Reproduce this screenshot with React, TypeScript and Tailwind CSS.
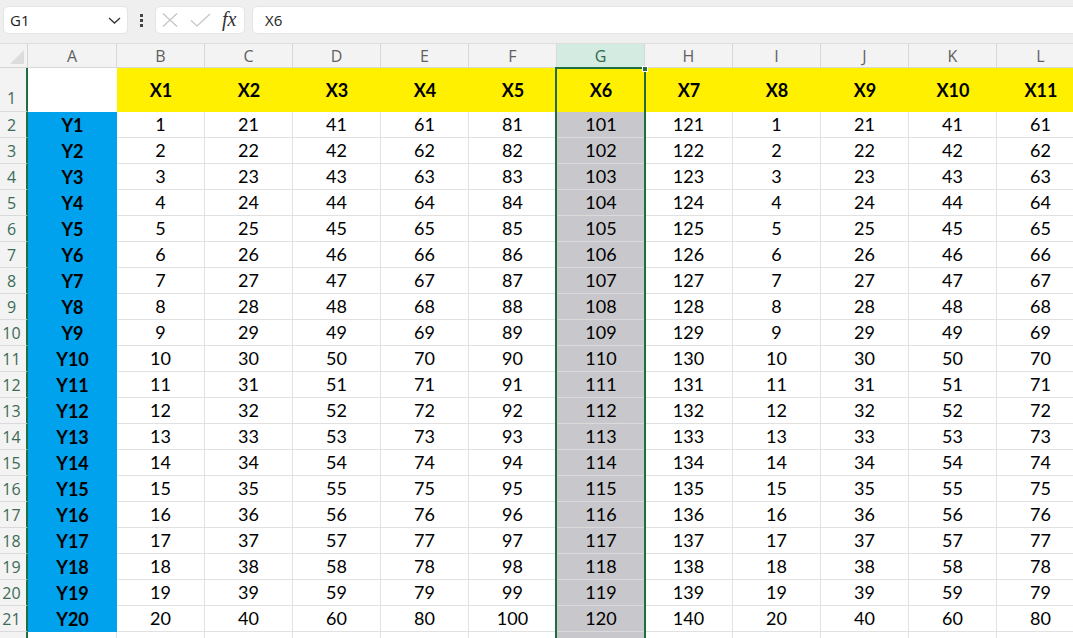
import React from 'react';

const COLS = ['A', 'B', 'C', 'D', 'E', 'F', 'G', 'H', 'I', 'J', 'K', 'L'];
const SEL = 6; // column G

// value of data cell: column index k (1..11 for B..L), row j (1..20)
const cellValue = (k: number, j: number) => ((k - 1) % 7) * 20 + j;

function Toolbar() {
  return (
    <div className="h-[44px] flex items-start pt-[6px] bg-[#efefef] border-b border-[#dedede] font-['Open_Sans',sans-serif]">
      {/* Name box */}
      <div className="shrink-0 ml-[3px] w-[125px] h-[28px] bg-white rounded-[5px] border border-[#e4e4e4] flex items-center justify-between pl-[6px] pr-[5px]">
        <span className="text-[15px] text-[#222]">G1</span>
        <svg width="13" height="7" viewBox="0 0 13 7" className="mr-[1px]">
          <path d="M1 1 L6.5 6 L12 1" fill="none" stroke="#333" strokeWidth="1.3" />
        </svg>
      </div>
      {/* Dots */}
      <div className="shrink-0 w-[27px] h-[28px] flex flex-col items-center justify-center gap-[2px]">
        <span className="w-[3px] h-[3px] bg-[#444]" />
        <span className="w-[3px] h-[3px] bg-[#444]" />
        <span className="w-[3px] h-[3px] bg-[#444]" />
      </div>
      {/* Cancel / enter / fx */}
      <div className="shrink-0 w-[90px] h-[28px] bg-white rounded-[5px] border border-[#e4e4e4] flex items-center pl-[6px]">
        <svg width="16" height="14" viewBox="0 0 16 14" className="shrink-0">
          <path d="M1 0.5 L15 13.5 M15 0.5 L1 13.5" stroke="#c4c4c4" strokeWidth="1.2" fill="none" />
        </svg>
        <svg width="21" height="14" viewBox="0 0 21 14" className="shrink-0 ml-[12px]">
          <path d="M1 7.5 L7 13 L20 1" stroke="#c4c4c4" strokeWidth="1.2" fill="none" />
        </svg>
        <span className="ml-[11px] text-[20px] leading-none italic text-[#333] font-['Liberation_Serif',serif] -mt-[2px]">
          fx
        </span>
      </div>
      {/* Formula box */}
      <div className="ml-[7px] w-[840px] shrink-0 h-[28px] bg-white rounded-[5px] border border-[#e4e4e4] flex items-center pl-[12px]">
        <span className="text-[15px] text-[#222]">X6</span>
      </div>
    </div>
  );
}

function RowHeader({ n, bottom }: { n?: number; bottom?: boolean }) {
  return (
    <div
      className={
        'flex justify-center pr-[3px] bg-[#f3f3f3] border-b border-[#dadada] border-r-2 border-r-[#1f6e43] text-[16px] text-[#3d6b55] font-["Open_Sans",sans-serif] ' +
        (bottom ? 'items-end pb-[1px]' : 'items-center')
      }
    >
      {n}
    </div>
  );
}

export default function App() {
  const rows: React.ReactNode[] = [];

  // column header row
  rows.push(
    <div key="corner" className="bg-[#f3f3f3] border-r border-b border-[#d4d4d4] flex items-end justify-end p-[3px]">
      <svg width="14" height="14" viewBox="0 0 14 14">
        <path d="M14 0 L14 14 L0 14 Z" fill="#dcdcdc" />
      </svg>
    </div>
  );
  COLS.forEach((c, i) => {
    rows.push(
      <div
        key={'h' + c}
        className={
          'flex items-center justify-center border-r border-b border-[#d8d8d8] text-[16px] font-["Open_Sans",sans-serif] ' +
          (i === SEL ? 'bg-[#d3ebe0] text-[#2d6a4e]' : 'bg-[#f3f3f3] text-[#5f5f5f]')
        }
      >
        {c}
      </div>
    );
  });

  // row 1: X labels
  rows.push(<RowHeader key="r1" n={1} bottom />);
  rows.push(<div key="a1" className="bg-white" />);
  for (let k = 1; k <= 11; k++) {
    rows.push(
      <div key={'x' + k} className="bg-[#fff000] flex items-center justify-center font-bold text-[18px] text-black">
        X{k}
      </div>
    );
  }

  // rows 2..21: data
  for (let j = 1; j <= 20; j++) {
    rows.push(<RowHeader key={'r' + (j + 1)} n={j + 1} />);
    rows.push(
      <div key={'y' + j} className="bg-[#00a2ed] flex items-center justify-center font-bold text-[18px] text-black">
        Y{j}
      </div>
    );
    for (let k = 1; k <= 11; k++) {
      const sel = k === SEL;
      rows.push(
        <div
          key={'c' + j + '-' + k}
          className={
            'flex items-center justify-center text-[18px] text-black border-b ' +
            (sel ? 'bg-[#c8c7cb] border-[#dadadc]' : 'bg-white border-r border-[#e1e1e1]')
          }
        >
          {cellValue(k, j)}
        </div>
      );
    }
  }

  // row 22 (cut off at the window edge)
  rows.push(<RowHeader key="r22" />);
  for (let k = 0; k <= 11; k++) {
    rows.push(
      <div
        key={'e' + k}
        className={k === SEL ? 'bg-[#c8c7cb]' : 'bg-white border-r border-b border-[#e1e1e1]'}
      />
    );
  }

  return (
    <div className="w-[1073px] h-[638px] overflow-hidden bg-white font-['Lato',sans-serif]">
      <Toolbar />
      <div className="relative">
        <div className="grid w-max grid-cols-[28px_89px_repeat(11,88px)] grid-rows-[24px_44px_repeat(21,26px)_26px]">
          {rows}
        </div>
        {/* selection outline on column G */}
        <div className="absolute left-[555px] top-[23px] w-[91px] h-[620px] border-2 border-[#1f6e43] pointer-events-none" />
        <div className="absolute left-[642px] top-[22px] w-[6px] h-[6px] bg-[#1f6e43] border border-white" />
      </div>
    </div>
  );
}
